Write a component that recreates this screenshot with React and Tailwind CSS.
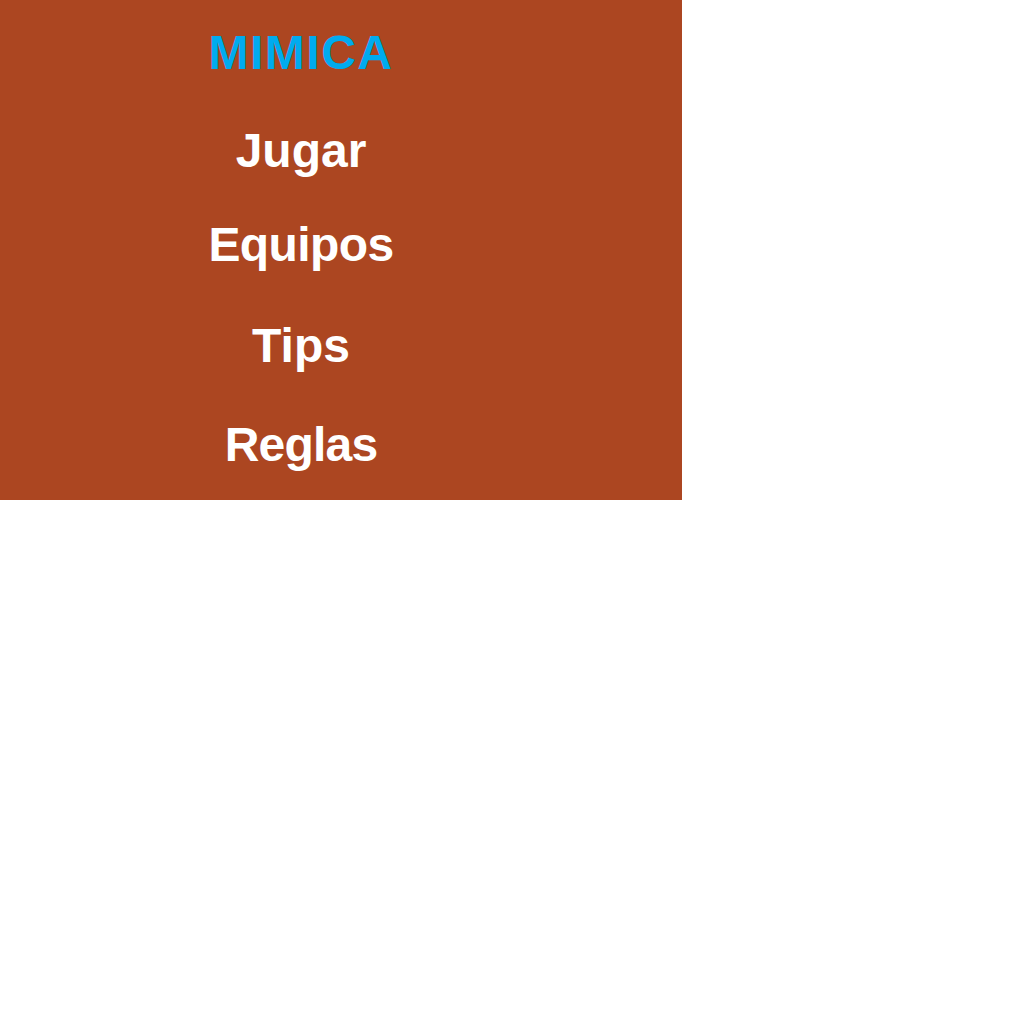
const items = [
  { label: 'Jugar', gap: 'mt-[50px]' },
  { label: 'Equipos', gap: 'mt-[46px] tracking-[-0.6px]' },
  { label: 'Tips', gap: 'mt-[53px]' },
  { label: 'Reglas', gap: 'mt-[51px] tracking-[-0.8px]' },
];

export default function App() {
  return (
    <div className="flex h-[500px] w-[682px] flex-col items-center bg-[#ac4621] pr-[80px] pt-[29px] font-['Liberation_Sans',Arial,sans-serif] text-[48px] font-bold leading-[48px]">
      <div className="tracking-[1.5px] text-[#00abef]">MIMICA</div>
      {items.map((item) => (
        <div key={item.label} className={`text-white ${item.gap}`}>
          {item.label}
        </div>
      ))}
    </div>
  );
}
